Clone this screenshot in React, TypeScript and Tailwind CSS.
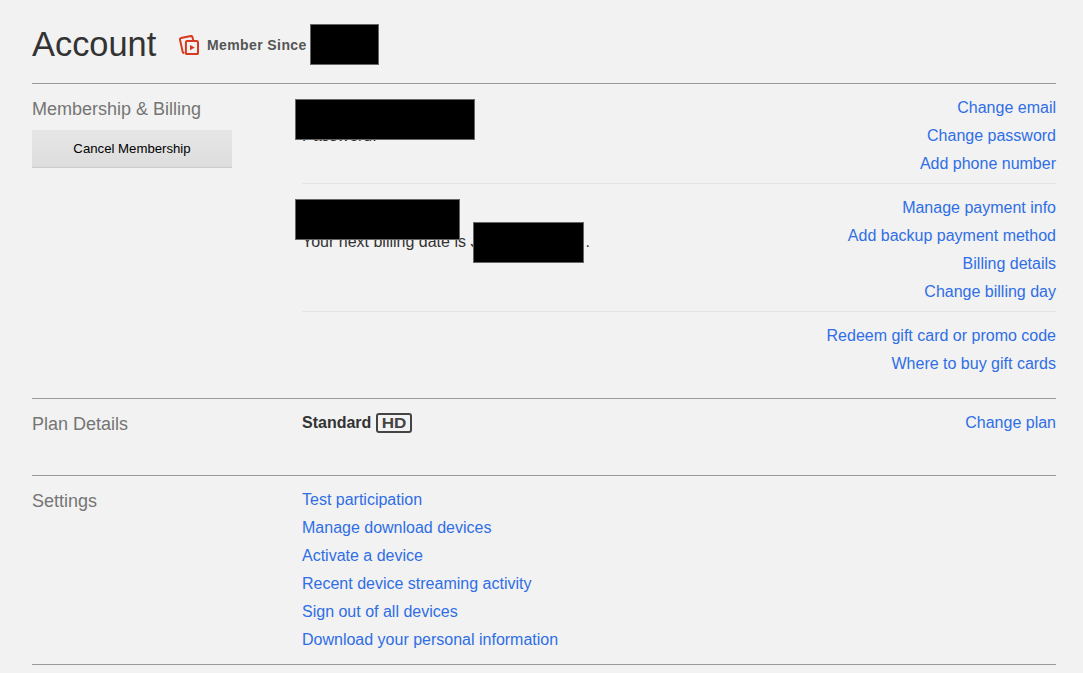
import React from "react";

const font = { fontFamily: '"Liberation Sans", Arial, sans-serif' };

function A({ children }: { children: React.ReactNode }) {
  return <a className="block h-7 text-base leading-7 text-[#2f6ee5] whitespace-nowrap">{children}</a>;
}

function Redact({ className }: { className: string }) {
  return <div className={"absolute bg-black border border-[#666] " + className} />;
}

export default function App() {
  return (
    <div className="relative w-[1083px] h-[673px] overflow-hidden bg-[#f2f2f2] pl-8 pr-[27px] font-['Liberation_Sans',Arial,sans-serif]" style={font}>
      <header className="flex items-center h-[83px] pt-[5px]">
        <h1 className="text-[34.4px] leading-[40px] text-[#333] font-normal w-[147px]">Account</h1>
        <svg width="20" height="20" viewBox="0 0 20 20" fill="none" className="shrink-0 mt-[2px]">
          <path d="M5.4 18.2 L4.4 17.8 Q3.9 17.6 3.7 17 L1 4.6 Q0.8 3.4 1.9 3.1 L12 1 Q13.1 0.9 13.4 1.9 L14.2 5" stroke="#d9391f" strokeWidth="2" strokeLinejoin="round" />
          <rect x="6.9" y="6.1" width="12.1" height="13" rx="1.2" fill="#f2f2f2" stroke="#d9391f" strokeWidth="2" />
          <path d="M11 10 L15.8 12.6 L11 15.2 Z" fill="#d9391f" />
        </svg>
        <span className="ml-[8px] mt-[2px] text-[14px] font-bold text-[#555] tracking-[0.4px] whitespace-nowrap">Member Since</span>
      </header>
      <Redact className="left-[310px] top-[24px] w-[69px] h-[41px]" />

      <section className="flex border-t border-[#999] h-[315px] pt-[9px]">
        <div className="w-[270px] shrink-0">
          <h2 className="text-lg leading-[32px] font-normal text-[#757575]">Membership &amp; Billing</h2>
          <button className="mt-[5px] block w-[200px] h-[38px] text-[13.2px] text-black bg-gradient-to-b from-[#e6e6e6] to-[#dddddd] border-b border-[#cccccc]">
            Cancel Membership
          </button>
        </div>
        <div className="flex-1">
          <div className="flex justify-between h-[91px] pt-px border-b border-[#e3e3e3]">
            <div className="pt-7 text-base leading-7 text-[#333]">Password:</div>
            <div className="text-right">
              <A>Change email</A>
              <A>Change password</A>
              <A>Add phone number</A>
            </div>
          </div>
          <div className="flex justify-between h-[128px] pt-[10px] border-b border-[#e3e3e3]">
            <div className="pt-[34px] text-base leading-7 text-[#333] whitespace-nowrap">
              Your next billing date is J<span className="inline-block w-[107px]" />.
            </div>
            <div className="text-right">
              <A>Manage payment info</A>
              <A>Add backup payment method</A>
              <A>Billing details</A>
              <A>Change billing day</A>
            </div>
          </div>
          <div className="pt-[10px] text-right">
            <A>Redeem gift card or promo code</A>
            <A>Where to buy gift cards</A>
          </div>
        </div>
      </section>
      <Redact className="left-[295px] top-[99px] w-[180px] h-[41px]" />
      <Redact className="left-[295px] top-[199px] w-[165px] h-[41px]" />
      <Redact className="left-[473px] top-[222px] w-[111px] h-[41px]" />

      <section className="flex border-t border-[#999] h-[77px] pt-[9px]">
        <h2 className="w-[270px] shrink-0 text-lg leading-[32px] font-normal text-[#757575]">Plan Details</h2>
        <div className="flex-1 flex justify-between pt-px">
          <div className="flex items-center h-7 gap-[5px]">
            <span className="text-base font-bold text-[#333]">Standard</span>
            <span className="flex items-center justify-center w-[36px] h-[20px] border-2 border-[#444] rounded-[3px] text-[14px] leading-none font-bold text-[#444]">
              <span className="inline-block scale-x-[1.22]">HD</span>
            </span>
          </div>
          <A>Change plan</A>
        </div>
      </section>

      <section className="flex border-t border-b border-[#999] h-[190px] pt-[9px]">
        <h2 className="w-[270px] shrink-0 text-lg leading-[32px] font-normal text-[#757575]">Settings</h2>
        <div className="flex-1 pt-px">
          <A>Test participation</A>
          <A>Manage download devices</A>
          <A>Activate a device</A>
          <A>Recent device streaming activity</A>
          <A>Sign out of all devices</A>
          <A>Download your personal information</A>
        </div>
      </section>
    </div>
  );
}
